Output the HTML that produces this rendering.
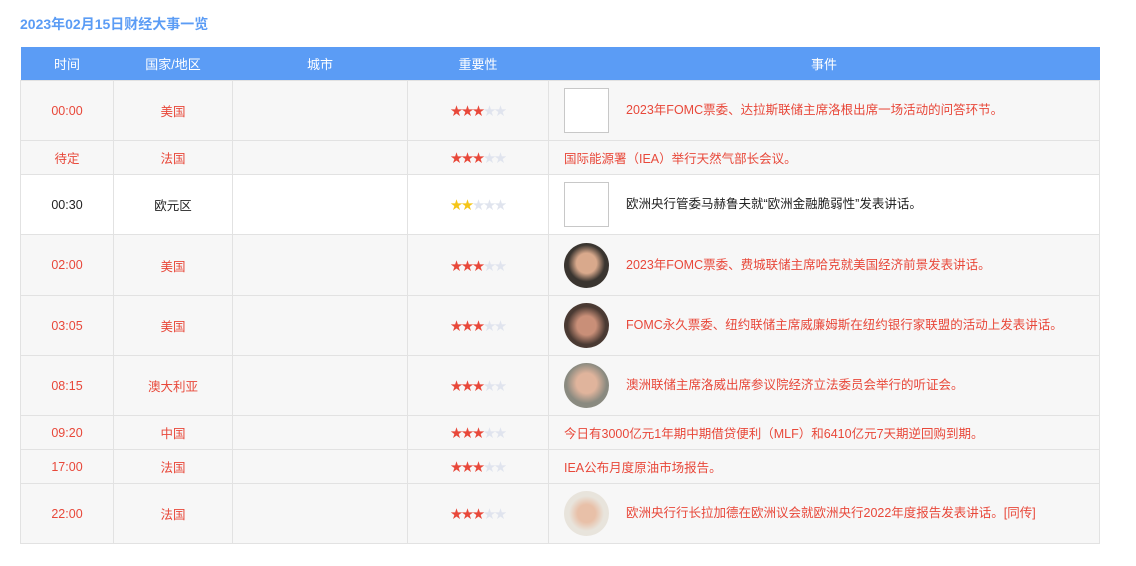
<!DOCTYPE html>
<html><head><meta charset="utf-8"><style>
body{margin:0;background:#fff;font-family:"Liberation Sans","Noto Sans CJK SC",sans-serif;font-size:12.5px;}
h1{position:absolute;left:20px;top:14px;margin:0;font-size:14px;font-weight:bold;color:#5b9cf5;}
table{position:absolute;left:20px;top:47px;width:1080px;border-collapse:collapse;table-layout:fixed;}
th{background:#5b9cf5;color:#fff;font-weight:normal;height:33px;padding:0;font-size:13px;}
td{border:1px solid #e2e2e2;text-align:center;padding:0;color:#e8483a;}
tr.g td{background:#f7f7f7;}
tr.w td{background:#fff;color:#222;}
td.ev{text-align:left;padding-left:15px;}
.av{display:inline-block;width:45px;height:45px;border-radius:50%;vertical-align:middle;margin-right:17px;}
.bk{display:inline-block;width:43px;height:43px;border:1px solid #c8c8c8;vertical-align:middle;margin-right:17px;background:#fff;}
.s{letter-spacing:-1px;font-size:12px;}
.r{color:#e8483a}.y{color:#f5c518}.e{color:#e0e4ee}
</style></head><body>
<h1>2023年02月15日财经大事一览</h1>
<table>
<colgroup><col style="width:93px"><col style="width:119px"><col style="width:175px"><col style="width:141px"><col></colgroup>
<tr><th>时间</th><th>国家/地区</th><th>城市</th><th>重要性</th><th>事件</th></tr>
<tr class="g" style="height:60px"><td>00:00</td><td>美国</td><td></td><td class="s"><span class="r">★★★</span><span class="e">★★</span></td><td class="ev"><span class="bk"></span>2023年FOMC票委、达拉斯联储主席洛根出席一场活动的问答环节。</td></tr>
<tr class="g" style="height:34px"><td>待定</td><td>法国</td><td></td><td class="s"><span class="r">★★★</span><span class="e">★★</span></td><td class="ev">国际能源署（IEA）举行天然气部长会议。</td></tr>
<tr class="w" style="height:60px"><td>00:30</td><td>欧元区</td><td></td><td class="s"><span class="y">★★</span><span class="e">★★★</span></td><td class="ev"><span class="bk"></span>欧洲央行管委马赫鲁夫就“欧洲金融脆弱性”发表讲话。</td></tr>
<tr class="g" style="height:61px"><td>02:00</td><td>美国</td><td></td><td class="s"><span class="r">★★★</span><span class="e">★★</span></td><td class="ev"><span class="av" style="background:radial-gradient(circle at 50% 45%,#d9a98c 0 30%,#3a3530 55%)"></span>2023年FOMC票委、费城联储主席哈克就美国经济前景发表讲话。</td></tr>
<tr class="g" style="height:60px"><td>03:05</td><td>美国</td><td></td><td class="s"><span class="r">★★★</span><span class="e">★★</span></td><td class="ev"><span class="av" style="background:radial-gradient(circle at 50% 50%,#c98f78 0 30%,#4a3a33 60%)"></span>FOMC永久票委、纽约联储主席威廉姆斯在纽约银行家联盟的活动上发表讲话。</td></tr>
<tr class="g" style="height:60px"><td>08:15</td><td>澳大利亚</td><td></td><td class="s"><span class="r">★★★</span><span class="e">★★</span></td><td class="ev"><span class="av" style="background:radial-gradient(circle at 50% 45%,#e0b49c 0 30%,#8a8a80 60%)"></span>澳洲联储主席洛威出席参议院经济立法委员会举行的听证会。</td></tr>
<tr class="g" style="height:34px"><td>09:20</td><td>中国</td><td></td><td class="s"><span class="r">★★★</span><span class="e">★★</span></td><td class="ev">今日有3000亿元1年期中期借贷便利（MLF）和6410亿元7天期逆回购到期。</td></tr>
<tr class="g" style="height:34px"><td>17:00</td><td>法国</td><td></td><td class="s"><span class="r">★★★</span><span class="e">★★</span></td><td class="ev">IEA公布月度原油市场报告。</td></tr>
<tr class="g" style="height:60px"><td>22:00</td><td>法国</td><td></td><td class="s"><span class="r">★★★</span><span class="e">★★</span></td><td class="ev"><span class="av" style="background:radial-gradient(circle at 50% 50%,#e8c0a8 0 28%,#e8e4dc 55%)"></span>欧洲央行行长拉加德在欧洲议会就欧洲央行2022年度报告发表讲话。[同传]</td></tr>
</table>
</body></html>
